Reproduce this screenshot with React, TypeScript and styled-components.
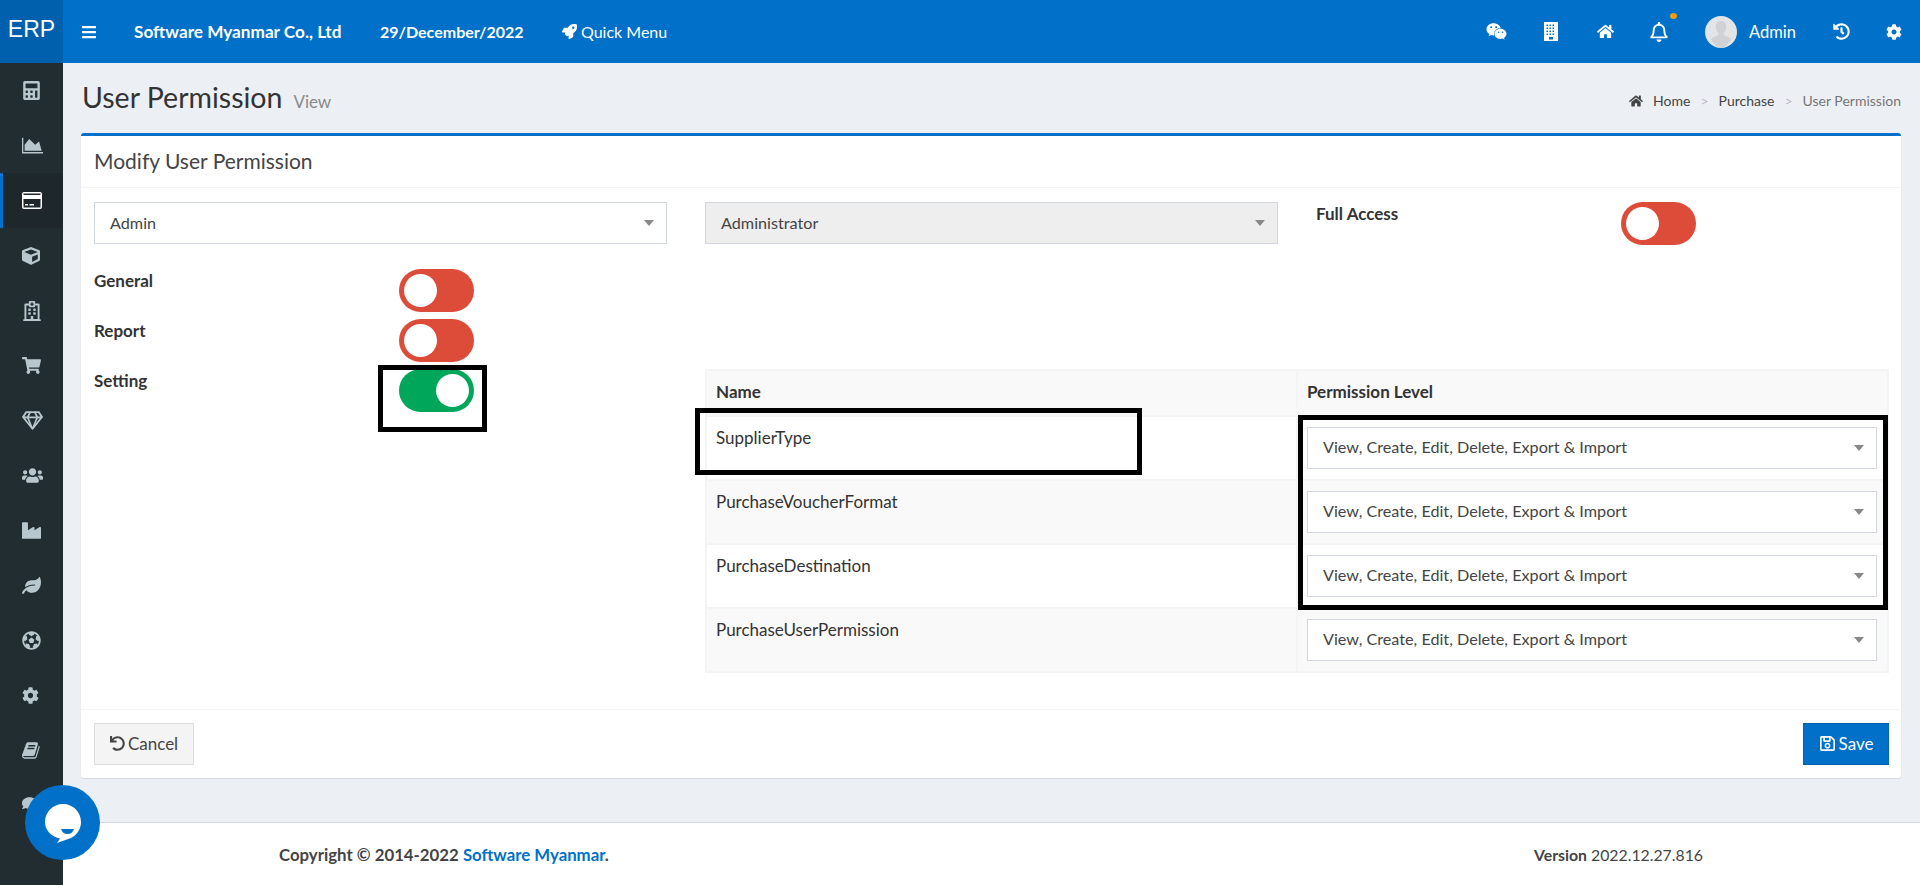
import React from "react";
import styled, { createGlobalStyle } from "styled-components";
import {
  FaBars,
  FaCalculator,
  FaCog,
  FaComments,
  FaCube,
  FaFutbol,
  FaHistory,
  FaHome,
  FaIndustry,
  FaLeaf,
  FaRegBell,
  FaRegGem,
  FaRegHospital,
  FaRegSave,
  FaRocket,
  FaShoppingCart,
  FaUndo,
  FaUsers,
  FaWeixin,
} from "react-icons/fa";

const BLUE = "#0070c9";

const GlobalStyle = createGlobalStyle`
  html, body {
    margin: 0;
    height: 100%;
    overflow: hidden;
    background: #ecf0f5;
    font-family: Lato, "Noto Sans", sans-serif;
    color: #333;
  }
  * { box-sizing: border-box; }
`;

const Shell = styled.div`
  display: flex;
  flex-direction: column;
  height: 885px;
  position: relative;
  overflow: hidden;
`;

const TopBar = styled.header`
  display: flex;
  align-items: center;
  height: 63px;
  background: ${BLUE};
  color: #fff;
  flex: none;
`;

const Logo = styled.div`
  width: 63px;
  height: 63px;
  display: flex;
  align-items: center;
  justify-content: center;
  background: #0060ad;
  font-family: "Liberation Sans", sans-serif;
  font-size: 23px;
  padding-bottom: 4px;
`;

const TopLeft = styled.div`
  display: flex;
  align-items: center;
  flex: 1;
  padding-left: 18px;
  font-size: 16px;
`;

const Burger = styled(FaBars)`
  width: 16px;
  height: 16px;
  margin-right: 37px;
`;

const Company = styled.span`
  font-weight: 700;
  font-size: 17.200px;
  width: 246px;
`;

const TopDate = styled.span`
  font-weight: 700;
  width: 182px;
`;

const QuickMenu = styled.span`
  display: flex;
  align-items: center;
  gap: 4px;
`;

const TopRight = styled.div`
  display: flex;
  align-items: center;
  padding-right: 18px;
`;

const TopIcon = styled.span<{ $gap: number }>`
  display: flex;
  position: relative;
  margin-right: ${(p) => p.$gap}px;
`;

const Dot = styled.i`
  position: absolute;
  left: 21px;
  top: -9px;
  width: 7px;
  height: 6px;
  border-radius: 50%;
  background: #f39c12;
`;

const AvatarCircle = styled.svg`
  width: 32px;
  height: 32px;
  margin-right: 12px;
`;

const UserName = styled.span`
  font-size: 16.500px;
  margin-right: 37px;
`;

const Body = styled.div`
  display: flex;
  flex: 1;
  min-height: 0;
`;

const Sidebar = styled.nav`
  width: 63px;
  flex: none;
  background: #222d32;
`;

const SideItem = styled.div<{ $active?: boolean }>`
  height: 55px;
  display: flex;
  align-items: center;
  padding-left: ${(p) => (p.$active ? 19 : 22)}px;
  color: ${(p) => (p.$active ? "#fff" : "#b8c7ce")};
  background: ${(p) => (p.$active ? "#1e282c" : "transparent")};
  border-left: ${(p) => (p.$active ? `3px solid ${BLUE}` : "0")};
`;

const Main = styled.main`
  flex: 1;
  display: flex;
  flex-direction: column;
  min-width: 0;
`;

const Content = styled.div`
  flex: 1;
  padding: 0 19px 0 18px;
`;

const TitleRow = styled.div`
  height: 70px;
  display: flex;
  align-items: center;
  justify-content: space-between;
  padding-bottom: 2px;
`;

const TitleWrap = styled.div`
  display: flex;
  align-items: baseline;
  gap: 11px;
  padding-left: 1px;
`;

const PageTitle = styled.h1`
  margin: 0;
  font-size: 28.500px;
  font-weight: 400;
  color: #333;
`;

const PageSub = styled.small`
  font-size: 17px;
  color: #8a8a8a;
`;

const Crumbs = styled.div`
  display: flex;
  align-items: center;
  font-size: 14px;
  color: #444;
  padding-top: 7px;
`;

const CrumbSep = styled.span`
  color: #bbb;
  margin: 0 10px;
`;

const CrumbLast = styled.span`
  color: #777;
`;

const CrumbHome = styled(FaHome)`
  margin-right: 10px;
  font-size: 14px;
`;

const Card = styled.section`
  background: #fff;
  border-top: 3px solid ${BLUE};
  border-radius: 3px;
  box-shadow: 0 1px 1px rgba(0, 0, 0, 0.1);
`;

const CardHead = styled.div`
  height: 52px;
  display: flex;
  align-items: center;
  padding: 0 13px 2px;
  font-size: 21px;
  color: #444;
  border-bottom: 1px solid #f4f4f4;
`;

const CardBody = styled.div`
  display: grid;
  grid-template-columns: repeat(3, 1fr);
  column-gap: 38px;
  padding: 14px 12px 36px 13px;
`;

const FieldRow = styled.div<{ $gapBelow?: boolean }>`
  display: flex;
  height: 43px;
  margin-bottom: ${(p) => (p.$gapBelow ? 7 : 0)}px;
  position: relative;
`;

const FieldLabel = styled.label`
  width: 305px;
  font-size: 17px;
  font-weight: 700;
  line-height: 23px;
`;

const ToggleTrack = styled.span<{ $on?: boolean }>`
  width: 75px;
  height: 43px;
  border-radius: 22px;
  padding: 5px;
  display: flex;
  justify-content: ${(p) => (p.$on ? "flex-end" : "flex-start")};
  background: ${(p) => (p.$on ? "#00a65a" : "#dd4b39")};
`;

const ToggleKnob = styled.span`
  width: 33px;
  height: 33px;
  border-radius: 50%;
  background: #fff;
`;

const Select = styled.div<{ $disabled?: boolean }>`
  height: 42px;
  display: flex;
  align-items: center;
  justify-content: space-between;
  padding: 0 12px 2px 15px;
  font-size: 16.200px;
  color: #444;
  border: 1px solid #d2d6de;
  background: ${(p) => (p.$disabled ? "#eee" : "#fff")};

  &::after {
    content: "";
    margin-top: 2px;
    border-style: solid;
    border-width: 6px 5px 0;
    border-color: #888 transparent transparent;
  }
`;

const LeftColumn = styled.div`
  padding-top: 24px;
`;

const TableWrap = styled.div`
  grid-column: 2 / 4;
  margin-top: 124px;
  position: relative;
`;

const Table = styled.table`
  width: 100%;
  table-layout: fixed;
  border-collapse: collapse;
  font-size: 17px;
`;

const HeadCell = styled.th`
  height: 46px;
  padding: 0 9px 3px;
  text-align: left;
  font-size: 17px;
  font-weight: 700;
  background: #f9f9f9;
  border: 2px solid #f4f4f4;
`;

const Row = styled.tr`
  &:nth-child(even) {
    background: #f9f9f9;
  }
`;

const Cell = styled.td`
  height: 64px;
  padding: 10px 10px 10px 9px;
  line-height: 22px;
  vertical-align: top;
  border: 2px solid #f4f4f4;
`;

// black marker rectangles drawn over the screenshot
const Marker = styled.div<{ $l: number; $t: number; $w: number; $h: number }>`
  position: absolute;
  left: ${(p) => p.$l}px;
  top: ${(p) => p.$t}px;
  width: ${(p) => p.$w}px;
  height: ${(p) => p.$h}px;
  border: 5px solid #000;
  pointer-events: none;
`;

const CardFoot = styled.div`
  display: flex;
  justify-content: space-between;
  align-items: center;
  height: 69px;
  padding: 0 12px 0 13px;
  border-top: 1px solid #f4f4f4;
`;

const Button = styled.button<{ $primary?: boolean }>`
  height: 42px;
  width: ${(p) => (p.$primary ? 86 : 100)}px;
  display: flex;
  align-items: center;
  justify-content: center;
  gap: 3px;
  padding: 0 0 2px;
  font: inherit;
  font-size: 17px;
  color: ${(p) => (p.$primary ? "#fff" : "#444")};
  background: ${(p) => (p.$primary ? BLUE : "#f4f4f4")};
  border: 1px solid ${(p) => (p.$primary ? "#0063b3" : "#ddd")};
`;

const Footer = styled.footer`
  height: 63px;
  flex: none;
  background: #fff;
  border-top: 1px solid #d2d6de;
  display: flex;
  align-items: center;
  justify-content: space-between;
  padding: 0 217px 0 216px;
  font-size: 15.800px;
  color: #444;
`;

const Copyright = styled.strong`
  font-size: 16.800px;
  font-weight: 700;
`;

const Strong = styled.strong`
  font-weight: 700;
`;

const FooterLink = styled.span`
  color: ${BLUE};
`;

const ChatBubble = styled.svg`
  position: absolute;
  left: 25px;
  top: 785px;
  width: 75px;
  height: 75px;
`;

const Svg = styled.svg`
  fill: currentColor;
  display: block;
`;

const BuildingIcon = () => (
  <Svg width="14" height="19" viewBox="0 0 14 19">
    <path
      fillRule="evenodd"
      d="M0 0h14v19H0zM2.500 2.500v1.500h1.500V2.500zm3 0v1.500h1.500V2.500zm3 0v1.500h1.500V2.500zm-6 3v1.500h1.500V5.500zm3 0v1.500h1.500V5.500zm3 0v1.500h1.500V5.500zm-6 3v1.500h1.500V8.500zm3 0v1.500h1.500V8.500zm3 0v1.500h1.500V8.500zm-6 3v1.500h1.500v-1.500zm3 0v1.500h1.500v-1.500zm3 0v1.500h1.500v-1.500zM5 15v2.500h4V15z"
    />
  </Svg>
);

const AreaChartIcon = () => (
  <Svg width="21" height="19" viewBox="0 0 2048 1792">
    <path d="M2048 1536v128h-2048v-1536h128v1408h1920zm-384-1024l256 896h-1664v-576l448-576 576 576z" />
  </Svg>
);

const CreditCardIcon = () => (
  <Svg width="20" height="17" viewBox="0 0 20 17">
    <path
      fillRule="evenodd"
      d="M2 0h16a2 2 0 0 1 2 2v13a2 2 0 0 1-2 2H2a2 2 0 0 1-2-2V2a2 2 0 0 1 2-2zm-.5 1.500v1.500h17V1.500zm0 5.500v8.500h17V7zM3 12h3v1.500H3zm4.500 0H12v1.500H7.500z"
    />
  </Svg>
);

const BookIcon = () => (
  <Svg width="19" height="19" viewBox="0 0 1792 1792">
    <path d="M1639 478q40 57 18 129l-275 906q-19 64-76.500 107.500t-122.500 43.500h-923q-77 0-148.500-53.500t-99.500-131.500q-24-67-2-127 0-4 3-27t4-37q1-8-3-21.500t-3-19.500q2-11 8-21t16.500-23.500 16.500-23.500q23-38 45-91.500t30-91.500q3-10 .5-30t-.5-28q3-11 17-28t17-23q21-36 42-92t25-90q1-9-2.500-32t.5-28q4-13 22-30.500t22-22.500q19-26 42.500-84.500t27.500-96.500q1-8-3-25.500t-2-26.500q2-8 9-18t18-23 17-21q8-12 16.500-30.500t15-35 16-36 19.500-32 26.500-23.500 36-11.500 47.500 5.500l-1 3q38-9 51-9h761q74 0 114 56t18 130l-274 906q-36 119-71.500 153.500t-128.500 34.500h-869q-27 0-38 15-11 16-1 43 24 70 144 70h923q29 0 56-15.500t35-41.500l300-987q7-22 5-57 38 15 59 43zm-1064 2q-4 13 2 22.500t20 9.500h608q13 0 25.500-9.500t16.500-22.500l21-64q4-13-2-22.500t-20-9.500h-608q-13 0-25.500 9.500t-16.500 22.500zm-83 256q-4 13 2 22.500t20 9.500h608q13 0 25.500-9.500t16.500-22.500l21-64q4-13-2-22.500t-20-9.500h-608q-13 0-25.500 9.500t-16.500 22.500z" />
  </Svg>
);

const sideIcons = [
  <FaCalculator size={19} />,
  <AreaChartIcon />,
  <CreditCardIcon />,
  <FaCube size={18} />,
  <FaRegHospital size={20} />,
  <FaShoppingCart size={19} />,
  <FaRegGem size={21} />,
  <FaUsers size={21} />,
  <FaIndustry size={19} />,
  <FaLeaf size={19} />,
  <FaFutbol size={19} />,
  <FaCog size={17} />,
  <BookIcon />,
  <FaComments size={21} />,
];

const permissions = [
  "SupplierType",
  "PurchaseVoucherFormat",
  "PurchaseDestination",
  "PurchaseUserPermission",
];

const ALL_LEVELS = "View, Create, Edit, Delete, Export & Import";

const Toggle: React.FC<{ on?: boolean }> = ({ on }) => (
  <ToggleTrack $on={on}>
    <ToggleKnob />
  </ToggleTrack>
);

export default function App() {
  return (
    <Shell>
      <GlobalStyle />
      <TopBar>
        <Logo>ERP</Logo>
        <TopLeft>
          <Burger />
          <Company>Software Myanmar Co., Ltd</Company>
          <TopDate>29/December/2022</TopDate>
          <QuickMenu>
            <FaRocket size={15} /> Quick Menu
          </QuickMenu>
        </TopLeft>
        <TopRight>
          <TopIcon $gap={37}>
            <FaWeixin size={21} />
          </TopIcon>
          <TopIcon $gap={39}>
            <BuildingIcon />
          </TopIcon>
          <TopIcon $gap={35}>
            <FaHome size={17} />
          </TopIcon>
          <TopIcon $gap={36}>
            <FaRegBell size={20} />
            <Dot />
          </TopIcon>
          <AvatarCircle viewBox="0 0 32 32">
            <circle cx="16" cy="16" r="16" fill="#e3e4e6" />
            <path
              d="M16 5c-3.400 0-5.400 2.700-5.200 6 .1 2.500 1.100 4.600 2.400 6 .5.7.2 2-.8 2.500-2.400 1-5.100 2-6.400 3.700A16 16 0 0 0 16 32a16 16 0 0 0 10-8.800c-1.300-1.700-4-2.700-6.400-3.700-1-.5-1.300-1.800-.8-2.500 1.300-1.400 2.300-3.500 2.400-6 .2-3.300-1.800-6-5.200-6z"
              fill="#cfd1d4"
            />
          </AvatarCircle>
          <UserName>Admin</UserName>
          <TopIcon $gap={36}>
            <FaHistory size={17} />
          </TopIcon>
          <TopIcon $gap={0}>
            <FaCog size={16} />
          </TopIcon>
        </TopRight>
      </TopBar>
      <Body>
        <Sidebar>
          {sideIcons.map((icon, i) => (
            <SideItem key={i} $active={i === 2}>
              {icon}
            </SideItem>
          ))}
        </Sidebar>
        <Main>
          <Content>
            <TitleRow>
              <TitleWrap>
                <PageTitle>User Permission</PageTitle>
                <PageSub>View</PageSub>
              </TitleWrap>
              <Crumbs>
                <CrumbHome />
                Home
                <CrumbSep>&gt;</CrumbSep>
                Purchase
                <CrumbSep>&gt;</CrumbSep>
                <CrumbLast>User Permission</CrumbLast>
              </Crumbs>
            </TitleRow>
            <Card>
              <CardHead>Modify User Permission</CardHead>
              <CardBody>
                <Select>Admin</Select>
                <Select $disabled>Administrator</Select>
                <FieldRow>
                  <FieldLabel>Full Access</FieldLabel>
                  <Toggle />
                </FieldRow>
                <LeftColumn>
                  <FieldRow $gapBelow>
                    <FieldLabel>General</FieldLabel>
                    <Toggle />
                  </FieldRow>
                  <FieldRow $gapBelow>
                    <FieldLabel>Report</FieldLabel>
                    <Toggle />
                  </FieldRow>
                  <FieldRow>
                    <FieldLabel>Setting</FieldLabel>
                    <Toggle on />
                    <Marker $l={284} $t={-4} $w={109} $h={67} />
                  </FieldRow>
                </LeftColumn>
                <TableWrap>
                  <Table>
                    <thead>
                      <tr>
                        <HeadCell>Name</HeadCell>
                        <HeadCell>Permission Level</HeadCell>
                      </tr>
                    </thead>
                    <tbody>
                      {permissions.map((name) => (
                        <Row key={name}>
                          <Cell>{name}</Cell>
                          <Cell>
                            <Select>{ALL_LEVELS}</Select>
                          </Cell>
                        </Row>
                      ))}
                    </tbody>
                  </Table>
                  <Marker $l={-10} $t={39} $w={447} $h={67} />
                  <Marker $l={593} $t={46} $w={590} $h={195} />
                </TableWrap>
              </CardBody>
              <CardFoot>
                <Button>
                  <FaUndo size={15} /> Cancel
                </Button>
                <Button $primary>
                  <FaRegSave size={17} /> Save
                </Button>
              </CardFoot>
            </Card>
          </Content>
          <Footer>
            <Copyright>
              Copyright © 2014-2022 <FooterLink>Software Myanmar</FooterLink>.
            </Copyright>
            <span>
              <Strong>Version</Strong> 2022.12.27.816
            </span>
          </Footer>
        </Main>
      </Body>
      <ChatBubble viewBox="0 0 75 75">
        <circle cx="37.500" cy="37.500" r="37.500" fill={BLUE} />
        <path
          d="M38 19c10 0 18 8 18 18 0 7-4 13-10 16l-14 5 3-4.500C25 51 20 44.500 20 37c0-10 8-18 18-18z"
          fill="#fff"
        />
        <path d="M36 44h13c-1 3-3 5-6.500 5S37 47 36 44z" fill={BLUE} />
      </ChatBubble>
    </Shell>
  );
}
